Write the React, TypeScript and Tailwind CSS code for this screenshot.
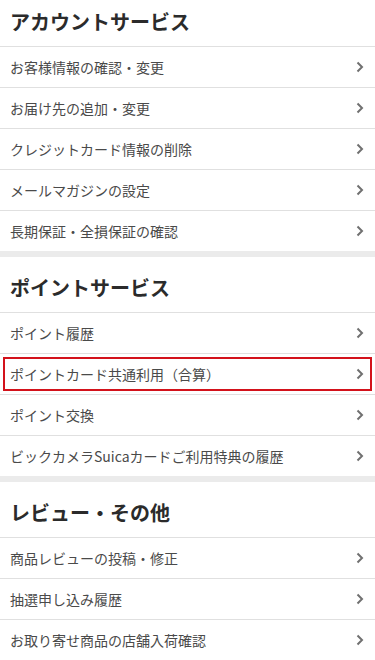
import React from "react";

const Chevron = () => (
  <svg width="8" height="12" viewBox="0 0 8 12" className="shrink-0">
    <polyline points="1.5,1.5 6,6 1.5,10.5" fill="none" stroke="#707070" strokeWidth="2" />
  </svg>
);

type Item = { label: string; active?: boolean };

const Row = ({ item }: { item: Item }) => (
  <div className="border-t border-[#e0e0e0]">
    {item.active ? (
      <div className="h-[40px] py-[3px] pl-[3px] pr-[3px]">
        <div className="h-[34px] border-2 border-[#d3121b] flex items-center justify-between pl-[5px] pr-[6px]">
          <span className="text-[14px] text-[#4a4a4a] leading-none">{item.label}</span>
          <Chevron />
        </div>
      </div>
    ) : (
      <div className="h-[40px] flex items-center justify-between pl-[10px] pr-[11px]">
        <span className="text-[14px] text-[#4a4a4a] leading-none">{item.label}</span>
        <Chevron />
      </div>
    )}
  </div>
);

const Section = ({ title, items, first }: { title: string; items: Item[]; first?: boolean }) => (
  <div className="bg-white">
    <div className={`${first ? "pt-[8px]" : "pt-[17px]"} pb-[10px] pl-[10px]`}>
      <h2 className="text-[20px] font-bold leading-[28px] text-[#2b2b2b]">{title}</h2>
    </div>
    {items.map((it) => (
      <Row key={it.label} item={it} />
    ))}
  </div>
);

export default function App() {
  return (
    <div
      className="w-[375px] h-[660px] overflow-hidden bg-white"
      style={{ fontFamily: '"Noto Sans CJK JP", "Noto Sans", sans-serif' }}
    >
      <Section
        first
        title="アカウントサービス"
        items={[
          { label: "お客様情報の確認・変更" },
          { label: "お届け先の追加・変更" },
          { label: "クレジットカード情報の削除" },
          { label: "メールマガジンの設定" },
          { label: "長期保証・全損保証の確認" },
        ]}
      />
      <div className="h-[6px] bg-[#ebebeb]" />
      <Section
        title="ポイントサービス"
        items={[
          { label: "ポイント履歴" },
          { label: "ポイントカード共通利用（合算）", active: true },
          { label: "ポイント交換" },
          { label: "ビックカメラSuicaカードご利用特典の履歴" },
        ]}
      />
      <div className="h-[6px] bg-[#ebebeb]" />
      <Section
        title="レビュー・その他"
        items={[
          { label: "商品レビューの投稿・修正" },
          { label: "抽選申し込み履歴" },
          { label: "お取り寄せ商品の店舗入荷確認" },
        ]}
      />
    </div>
  );
}
